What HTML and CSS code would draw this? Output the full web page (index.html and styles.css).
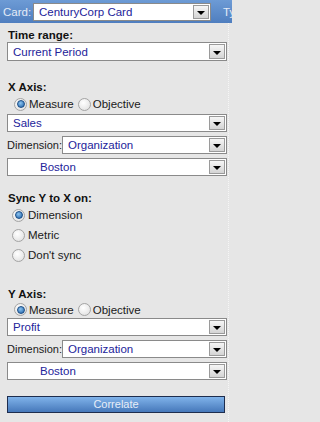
FILE: index.html
```html
<!DOCTYPE html>
<html>
<head>
<meta charset="utf-8">
<link rel="stylesheet" href="styles.css">
</head>
<body>
<div class="page">
  <div class="header">
    <span class="hlabel">Card:</span>
    <div class="select card-select"><span class="val">CenturyCorp Card</span><span class="arrow"></span></div>
    <span class="hlabel ty">Ty</span>
  </div>
  <div class="content">
    <div class="label lbl-time">Time range:</div>
    <div class="select tall"><span class="val">Current Period</span><span class="arrow"></span></div>

    <div class="label lbl-x">X Axis:</div>
    <div class="radios row-x">
      <span class="radio on"></span><span class="rtext">Measure</span>
      <span class="radio"></span><span class="rtext">Objective</span>
    </div>
    <div class="select"><span class="val">Sales</span><span class="arrow"></span></div>
    <div class="dimrow">
      <span class="dimlabel">Dimension:</span>
      <div class="select grow"><span class="val">Organization</span><span class="arrow"></span></div>
    </div>
    <div class="select gap"><span class="val indent">Boston</span><span class="arrow"></span></div>

    <div class="label lbl-sync">Sync Y to X on:</div>
    <div class="synclist">
      <div class="syncrow"><span class="radio on"></span><span class="rtext">Dimension</span></div>
      <div class="syncrow"><span class="radio"></span><span class="rtext">Metric</span></div>
      <div class="syncrow"><span class="radio"></span><span class="rtext">Don't sync</span></div>
    </div>

    <div class="label lbl-y">Y Axis:</div>
    <div class="radios row-y">
      <span class="radio on"></span><span class="rtext">Measure</span>
      <span class="radio"></span><span class="rtext">Objective</span>
    </div>
    <div class="select"><span class="val">Profit</span><span class="arrow"></span></div>
    <div class="dimrow">
      <span class="dimlabel">Dimension:</span>
      <div class="select grow"><span class="val">Organization</span><span class="arrow"></span></div>
    </div>
    <div class="select gap"><span class="val indent">Boston</span><span class="arrow"></span></div>

    <div class="button">Correlate</div>
  </div>
</div>
</body>
</html>
```
FILE: styles.css
```css
html, body {
  margin: 0;
  padding: 0;
}
body {
  background: #e6e6e6;
  font-family: "Liberation Sans", Arial, sans-serif;
  font-size: 11px;
  color: #1a1a1a;
  width: 232px;
  height: 422px;
  overflow: hidden;
}
.page {
  width: 228px;
  height: 422px;
  border-right: 1px dotted #f6f6f6;
}
.header {
  box-sizing: border-box;
  height: 23px;
  background: linear-gradient(#6d9bd5, #4f7ebf);
  display: flex;
  align-items: center;
  padding-left: 3px;
  white-space: nowrap;
  width: 232px;
  overflow: hidden;
}
.hlabel {
  color: #e3ebf7;
  font-size: 11.5px;
  width: 30px;
  flex: none;
}
.ty {
  width: auto;
  margin-left: 12px;
}
.card-select {
  flex: none;
  width: 178px;
  height: 17px;
  margin-top: 1px;
}
.content {
  padding-left: 7px;
  width: 220px;
}
.label {
  font-weight: bold;
  font-size: 11.5px;
  line-height: 14px;
  color: #111;
  padding-left: 1px;
}
.lbl-time { margin-top: 5px; }
.lbl-x { margin-top: 19px; }
.lbl-sync { margin-top: 15px; }
.lbl-y { margin-top: 22px; }

.select {
  box-sizing: border-box;
  height: 18px;
  background: #fff;
  border: 1px solid #8a8a8a;
  display: flex;
  align-items: center;
  position: relative;
  color: #23239a;
  font-size: 11.5px;
}
.select.tall { height: 19px; }
.select.gap { margin-top: 4px; }
.select.grow { flex: 1; }
.val {
  padding-left: 5px;
  flex: 1;
  white-space: nowrap;
  overflow: hidden;
}
.val.indent { padding-left: 32px; }
.arrow {
  box-sizing: border-box;
  width: 16px;
  align-self: stretch;
  margin: 1px;
  border: 1px solid #9a9a9a;
  background: linear-gradient(#f6f6f6, #d4d4d4);
  display: flex;
  align-items: center;
  justify-content: center;
}
.arrow::after {
  content: "";
  width: 0;
  height: 0;
  margin-top: 2px;
  border-left: 4px solid transparent;
  border-right: 4px solid transparent;
  border-top: 4px solid #000;
}
.radios {
  display: flex;
  align-items: center;
  padding-left: 7px;
}
.row-x { height: 20px; }
.row-y { height: 17px; }
.radio {
  box-sizing: border-box;
  width: 13px;
  height: 13px;
  border-radius: 50%;
  border: 1px solid #a4a4a4;
  background: radial-gradient(circle at 40% 35%, #ffffff, #dcdcdc);
  display: inline-flex;
  align-items: center;
  justify-content: center;
  flex: none;
}
.radio.on::after {
  content: "";
  width: 6px;
  height: 6px;
  border-radius: 50%;
  background: radial-gradient(circle at 40% 35%, #8cc4f0, #1d5fa6);
  border: 0.5px solid #1b4d86;
}
.rtext {
  margin-left: 2px;
  margin-right: 4px;
  font-size: 11.5px;
  color: #1a1a1a;
}
.dimrow {
  display: flex;
  align-items: center;
  margin-top: 4px;
}
.dimlabel {
  width: 55px;
  font-size: 11px;
  white-space: nowrap;
}
.synclist {
  padding-left: 5px;
}
.syncrow {
  height: 20px;
  display: flex;
  align-items: center;
}
.syncrow .rtext { margin-left: 3px; }
.button {
  box-sizing: border-box;
  margin-top: 16px;
  width: 218px;
  height: 17px;
  border: 1px solid #1e2d4e;
  background: linear-gradient(#80b3ea, #4678ba);
  color: #e6edf8;
  font-size: 11px;
  text-align: center;
  line-height: 15px;
}
```
